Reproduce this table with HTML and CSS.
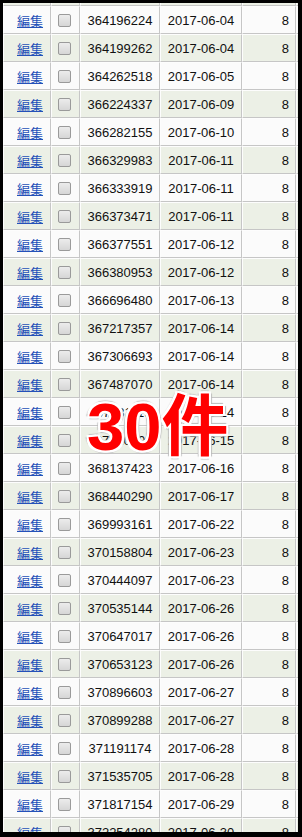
FILE: index.html
```html
<!DOCTYPE html>
<html lang="ja">
<head>
<meta charset="utf-8">
<link rel="stylesheet" href="styles.css">
</head>
<body>
<div class="frame">
  <table class="grid">
    <colgroup>
      <col class="c-edit"><col class="c-check"><col class="c-id"><col class="c-date"><col class="c-num"><col class="c-rest">
    </colgroup>
    <tbody>
      <tr class="alt"><td></td><td></td><td></td><td></td><td></td><td></td></tr>
      <tr><td class="edit"><a href="#">編集</a></td><td class="chk"><span class="box"></span></td><td class="id">364196224</td><td class="date">2017-06-04</td><td class="num">8</td><td></td></tr>
      <tr class="alt"><td class="edit"><a href="#">編集</a></td><td class="chk"><span class="box"></span></td><td class="id">364199262</td><td class="date">2017-06-04</td><td class="num">8</td><td></td></tr>
      <tr><td class="edit"><a href="#">編集</a></td><td class="chk"><span class="box"></span></td><td class="id">364262518</td><td class="date">2017-06-05</td><td class="num">8</td><td></td></tr>
      <tr class="alt"><td class="edit"><a href="#">編集</a></td><td class="chk"><span class="box"></span></td><td class="id">366224337</td><td class="date">2017-06-09</td><td class="num">8</td><td></td></tr>
      <tr><td class="edit"><a href="#">編集</a></td><td class="chk"><span class="box"></span></td><td class="id">366282155</td><td class="date">2017-06-10</td><td class="num">8</td><td></td></tr>
      <tr class="alt"><td class="edit"><a href="#">編集</a></td><td class="chk"><span class="box"></span></td><td class="id">366329983</td><td class="date">2017-06-11</td><td class="num">8</td><td></td></tr>
      <tr><td class="edit"><a href="#">編集</a></td><td class="chk"><span class="box"></span></td><td class="id">366333919</td><td class="date">2017-06-11</td><td class="num">8</td><td></td></tr>
      <tr class="alt"><td class="edit"><a href="#">編集</a></td><td class="chk"><span class="box"></span></td><td class="id">366373471</td><td class="date">2017-06-11</td><td class="num">8</td><td></td></tr>
      <tr><td class="edit"><a href="#">編集</a></td><td class="chk"><span class="box"></span></td><td class="id">366377551</td><td class="date">2017-06-12</td><td class="num">8</td><td></td></tr>
      <tr class="alt"><td class="edit"><a href="#">編集</a></td><td class="chk"><span class="box"></span></td><td class="id">366380953</td><td class="date">2017-06-12</td><td class="num">8</td><td></td></tr>
      <tr><td class="edit"><a href="#">編集</a></td><td class="chk"><span class="box"></span></td><td class="id">366696480</td><td class="date">2017-06-13</td><td class="num">8</td><td></td></tr>
      <tr class="alt"><td class="edit"><a href="#">編集</a></td><td class="chk"><span class="box"></span></td><td class="id">367217357</td><td class="date">2017-06-14</td><td class="num">8</td><td></td></tr>
      <tr><td class="edit"><a href="#">編集</a></td><td class="chk"><span class="box"></span></td><td class="id">367306693</td><td class="date">2017-06-14</td><td class="num">8</td><td></td></tr>
      <tr class="alt"><td class="edit"><a href="#">編集</a></td><td class="chk"><span class="box"></span></td><td class="id">367487070</td><td class="date">2017-06-14</td><td class="num">8</td><td></td></tr>
      <tr><td class="edit"><a href="#">編集</a></td><td class="chk"><span class="box"></span></td><td class="id">367731119</td><td class="date">2017-06-14</td><td class="num">8</td><td></td></tr>
      <tr class="alt"><td class="edit"><a href="#">編集</a></td><td class="chk"><span class="box"></span></td><td class="id">367810106</td><td class="date">2017-06-15</td><td class="num">8</td><td></td></tr>
      <tr><td class="edit"><a href="#">編集</a></td><td class="chk"><span class="box"></span></td><td class="id">368137423</td><td class="date">2017-06-16</td><td class="num">8</td><td></td></tr>
      <tr class="alt"><td class="edit"><a href="#">編集</a></td><td class="chk"><span class="box"></span></td><td class="id">368440290</td><td class="date">2017-06-17</td><td class="num">8</td><td></td></tr>
      <tr><td class="edit"><a href="#">編集</a></td><td class="chk"><span class="box"></span></td><td class="id">369993161</td><td class="date">2017-06-22</td><td class="num">8</td><td></td></tr>
      <tr class="alt"><td class="edit"><a href="#">編集</a></td><td class="chk"><span class="box"></span></td><td class="id">370158804</td><td class="date">2017-06-23</td><td class="num">8</td><td></td></tr>
      <tr><td class="edit"><a href="#">編集</a></td><td class="chk"><span class="box"></span></td><td class="id">370444097</td><td class="date">2017-06-23</td><td class="num">8</td><td></td></tr>
      <tr class="alt"><td class="edit"><a href="#">編集</a></td><td class="chk"><span class="box"></span></td><td class="id">370535144</td><td class="date">2017-06-26</td><td class="num">8</td><td></td></tr>
      <tr><td class="edit"><a href="#">編集</a></td><td class="chk"><span class="box"></span></td><td class="id">370647017</td><td class="date">2017-06-26</td><td class="num">8</td><td></td></tr>
      <tr class="alt"><td class="edit"><a href="#">編集</a></td><td class="chk"><span class="box"></span></td><td class="id">370653123</td><td class="date">2017-06-26</td><td class="num">8</td><td></td></tr>
      <tr><td class="edit"><a href="#">編集</a></td><td class="chk"><span class="box"></span></td><td class="id">370896603</td><td class="date">2017-06-27</td><td class="num">8</td><td></td></tr>
      <tr class="alt"><td class="edit"><a href="#">編集</a></td><td class="chk"><span class="box"></span></td><td class="id">370899288</td><td class="date">2017-06-27</td><td class="num">8</td><td></td></tr>
      <tr><td class="edit"><a href="#">編集</a></td><td class="chk"><span class="box"></span></td><td class="id">371191174</td><td class="date">2017-06-28</td><td class="num">8</td><td></td></tr>
      <tr class="alt"><td class="edit"><a href="#">編集</a></td><td class="chk"><span class="box"></span></td><td class="id">371535705</td><td class="date">2017-06-28</td><td class="num">8</td><td></td></tr>
      <tr><td class="edit"><a href="#">編集</a></td><td class="chk"><span class="box"></span></td><td class="id">371817154</td><td class="date">2017-06-29</td><td class="num">8</td><td></td></tr>
      <tr class="alt"><td class="edit"><a href="#">編集</a></td><td class="chk"><span class="box"></span></td><td class="id">372254280</td><td class="date">2017-06-30</td><td class="num">8</td><td></td></tr>
    </tbody>
  </table>
  <div class="count">30件</div>
</div>
</body>
</html>
```

FILE: styles.css
```css
html, body {
  margin: 0;
  padding: 0;
  background: #000;
}
body {
  width: 302px;
  height: 837px;
  padding: 3px 0 0 3px;
  box-sizing: border-box;
}
.frame {
  position: relative;
  width: 295px;
  height: 829px;
  overflow: hidden;
  background: #fbfbfb;
}
.grid {
  table-layout: fixed;
  border-collapse: separate;
  border-spacing: 0;
  width: 305px;
  margin-top: -25px;
  font-family: "Liberation Sans", Arial, sans-serif;
  font-size: 13px;
  color: #111;
}
.c-edit { width: 48px; }
.c-check { width: 29px; }
.c-id { width: 80px; }
.c-date { width: 82px; }
.c-num { width: 54px; }
.c-rest { width: 12px; }
.grid td {
  box-sizing: border-box;
  height: 28px;
  padding: 0;
  border-top: 1px solid #fdfdfd;
  border-left: 1px solid #fdfdfd;
  border-right: 1px solid #c6c6c6;
  border-bottom: 1px solid #c6c6c6;
  background: #fbfbfb;
  vertical-align: middle;
  white-space: nowrap;
  overflow: hidden;
}
.grid tr.alt td {
  background: #ecf0e6;
}
.grid td.edit {
  padding-left: 13px;
  font-family: "Noto Sans CJK JP", sans-serif;
  font-size: 13px;
}
.edit a {
  color: #2450b8;
  text-decoration: underline;
}
.grid td.chk {
  text-align: left;
  padding-left: 6px;
}
.box {
  display: block;
  width: 11px;
  height: 11px;
  border: 1px solid #9a9a9a;
  border-radius: 2px;
  background: linear-gradient(#ececec, #d6d6d6);
}
.grid td.id,
.grid td.date {
  text-align: center;
}
.grid td.num {
  text-align: right;
  padding-right: 6px;
}
.count {
  position: absolute;
  left: 84px;
  top: 390px;
  font-family: "Liberation Sans", "Noto Sans CJK JP", sans-serif;
  font-weight: bold;
  font-size: 67px;
  line-height: 67px;
  color: #ff0000;
  text-shadow:
    2px 0 0 #fff, -2px 0 0 #fff, 0 2px 0 #fff, 0 -2px 0 #fff,
    2px 2px 0 #fff, -2px -2px 0 #fff, 2px -2px 0 #fff, -2px 2px 0 #fff,
    3px 0 1px #bbb, -3px 0 1px #bbb, 0 3px 1px #bbb, 0 -3px 1px #bbb;
}
```
